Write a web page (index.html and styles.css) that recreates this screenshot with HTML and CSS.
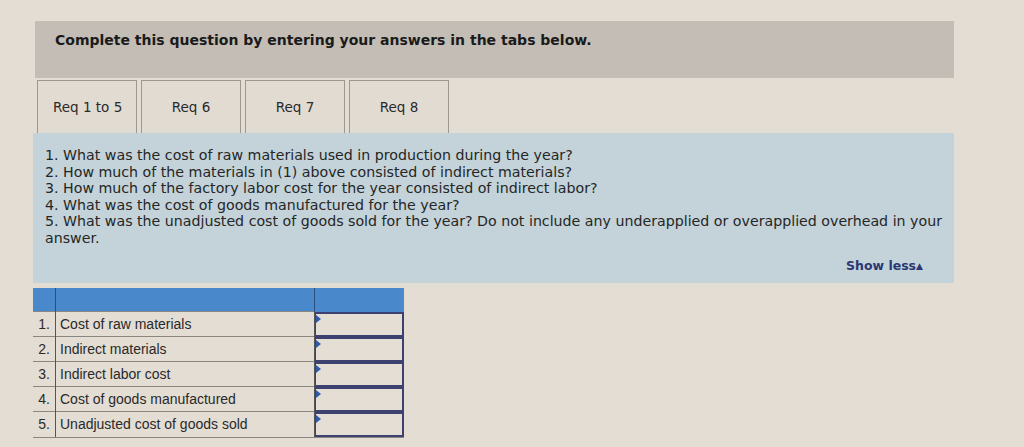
FILE: index.html
```html
<!DOCTYPE html>
<html>
<head>
<meta charset="utf-8">
<link rel="stylesheet" href="styles.css">
</head>
<body>
<div class="page">
  <div class="banner">Complete this question by entering your answers in the tabs below.</div>
  <div class="tabs">
    <div class="tab">Req 1 to 5</div>
    <div class="tab">Req 6</div>
    <div class="tab">Req 7</div>
    <div class="tab">Req 8</div>
  </div>
  <div class="panel">
    <div class="questions">
      <div>1. What was the cost of raw materials used in production during the year?</div>
      <div>2. How much of the materials in (1) above consisted of indirect materials?</div>
      <div>3. How much of the factory labor cost for the year consisted of indirect labor?</div>
      <div>4. What was the cost of goods manufactured for the year?</div>
      <div>5. What was the unadjusted cost of goods sold for the year? Do not include any underapplied or overapplied overhead in your answer.</div>
    </div>
    <div class="showless">Show less<span class="tri">&#9650;</span></div>
  </div>
  <table class="answers">
    <tr class="head"><th class="c1"></th><th class="c2"></th><th class="c3"></th></tr>
    <tr><td class="c1">1.</td><td class="c2">Cost of raw materials</td><td class="c3"><div class="inp"></div></td></tr>
    <tr><td class="c1">2.</td><td class="c2">Indirect materials</td><td class="c3"><div class="inp"></div></td></tr>
    <tr><td class="c1">3.</td><td class="c2">Indirect labor cost</td><td class="c3"><div class="inp"></div></td></tr>
    <tr><td class="c1">4.</td><td class="c2">Cost of goods manufactured</td><td class="c3"><div class="inp"></div></td></tr>
    <tr><td class="c1">5.</td><td class="c2">Unadjusted cost of goods sold</td><td class="c3"><div class="inp"></div></td></tr>
  </table>
</div>
</body>
</html>
```
FILE: styles.css
```css
html, body {
  margin: 0;
  padding: 0;
  background: #e3ddd3;
  font-family: "DejaVu Sans", Verdana, sans-serif;
  color: #1f1f1f;
}
.page {
  padding: 21px 0 0 33px;
  width: 921px;
}
.banner {
  margin-left: 2px;
  height: 57px;
  background: #c3bdb5;
  box-sizing: border-box;
  padding: 11px 0 0 20px;
  font-weight: bold;
  font-size: 14px;
  color: #1a1a1a;
}
.tabs {
  display: flex;
  gap: 4px;
  margin: 2px 0 0 4px;
  height: 53px;
}
.tab {
  width: 100px;
  box-sizing: border-box;
  border: 1px solid #9c978f;
  border-bottom: none;
  background: #e1dbd2;
  font-size: 13.5px;
  padding-top: 18px;
  text-align: center;
  color: #2a2a2a;
}
.tab:first-child { text-align: left; padding-left: 15px; }
.panel {
  background: #c3d3d9;
  height: 150px;
  box-sizing: border-box;
  padding: 14px 0 0 12px;
  display: flex;
  flex-direction: column;
}
.questions {
  font-size: 14.2px;
  line-height: 16.5px;
  color: #262626;
  padding-right: 12px;
}
.showless {
  margin-top: auto;
  margin-bottom: 10px;
  align-self: flex-end;
  margin-right: 31px;
  font-weight: bold;
  font-size: 12.5px;
  color: #2b3872;
}
.tri { font-size: 9px; position: relative; top: -1px; }
.answers {
  margin-top: 5px;
  border-collapse: collapse;
  font-family: "Liberation Sans", Arial, sans-serif;
  font-size: 14px;
  color: #2a2a2a;
}
.answers td, .answers th { padding: 0; height: 24px; }
.answers .head th {
  background: #4a88cc;
  height: 23px;
  border-right: 1px solid #2d4f80;
}
.answers .head th:last-child { border-right: none; }
.answers .c1 { width: 22px; text-align: center; }
.answers .c2 { width: 259px; padding-left: 4px; box-sizing: border-box; border-left: 1px solid #555; }
.answers .c3 { width: 89px; border-left: 1px solid #555; }
.answers tr + tr td { border-top: 1px solid #8a8783; }
.answers tr:last-child td { border-bottom: 1px solid #8a8783; }
.answers td.c3 { border-top: none; position: relative; }
.inp {
  height: 25px;
  box-sizing: border-box;
  border: 2px solid #3d4170;
  border-left-width: 1px;
  background: #e4ded4;
  position: relative;
}
.inp::before {
  content: "";
  position: absolute;
  left: 0;
  top: 1px;
  border-left: 5px solid #2e5aa8;
  border-top: 4px solid transparent;
  border-bottom: 4px solid transparent;
}
```
